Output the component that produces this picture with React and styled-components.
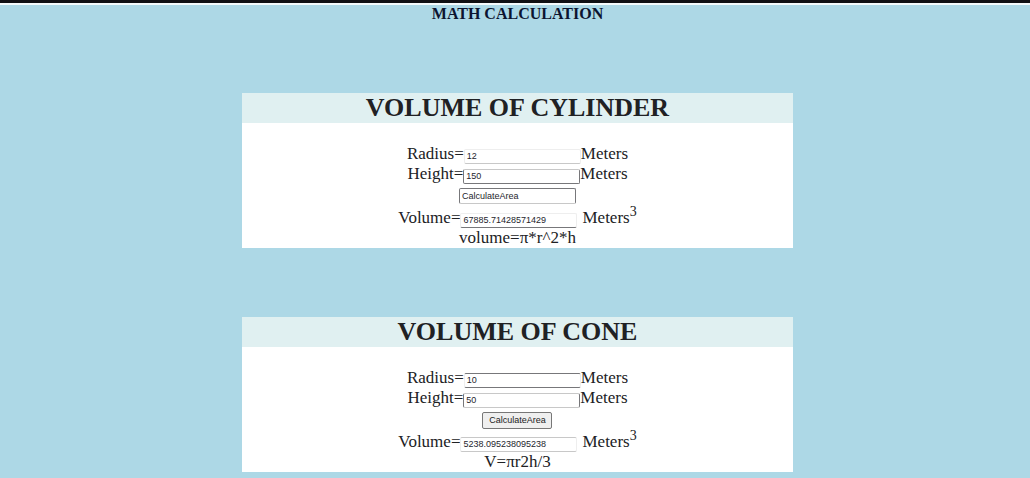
import React, { useState } from "react";
import styled, { createGlobalStyle } from "styled-components";

const GlobalStyle = createGlobalStyle`
  * { box-sizing: border-box; }
  body {
    margin: 0;
    background: #add8e6;
    color: #202124;
    font-family: "Liberation Serif", "Times New Roman", serif;
  }
`;

const TopBar = styled.div`
  height: 5px;
  background: #101014;
  border-bottom: 2px solid #f4fafc;
`;

const Page = styled.main`
  display: flex;
  flex-direction: column;
  align-items: center;
  padding: 0 0 6px 5px;
`;

const PageTitle = styled.h1`
  margin: 0 0 70px;
  font-size: 16px;
  line-height: 18px;
  color: #0c1430;
`;

const Cards = styled.div`
  display: flex;
  flex-direction: column;
  align-items: center;
  gap: 69px;
  width: 100%;
`;

const Card = styled.section`
  width: 53.7%;
  min-width: 320px;
  background: #fff;
  text-align: center;
`;

const CardTitle = styled.h2`
  margin: 0 0 21px;
  background: #e0f0f1;
  font-size: 26px;
  line-height: 30px;
`;

const Row = styled.div`
  display: flex;
  justify-content: center;
  align-items: center;
  height: ${(p) => (p.$tall ? "24px" : "20px")};
  font-size: 17px;
  line-height: 20px;
`;

const Field = styled.input`
  width: 117px;
  height: 15px;
  margin: 4px 0 0;
  padding: 0 2px;
  border: 1px solid;
  border-color: ${(p) => p.$edges};
  border-radius: 2px;
  background: #fff;
  color: #25252d;
  font: 9px "Liberation Sans", Arial, sans-serif;
  outline: none;
`;

const ActionField = styled(Field)`
  height: 16px;
  margin: 0;
`;

const Button = styled.button`
  width: 70px;
  height: 17px;
  padding: 0;
  border: 1px solid #777;
  border-radius: 2px;
  background: #efefef;
  color: #222;
  font: 9px "Liberation Sans", Arial, sans-serif;
`;

const Unit = styled.span`
  margin-left: ${(p) => (p.$spaced ? "5px" : "0")};
`;

const Cube = styled.sup`
  font-size: 14px;
  line-height: 0;
`;

const Formula = styled.p`
  margin: 0;
  font-size: 17px;
  line-height: 20px;
`;

const FAINT = "#eeeeee";
const LIGHT = "#c8c8c8";
const DARK = "#77777a";

function Measure({ id, label, edges, initial, volume }) {
  const [value, setValue] = useState(initial);
  return (
    <Row>
      <label htmlFor={id}>{label}=</label>
      <Field
        id={id}
        $edges={edges}
        value={value}
        onChange={(e) => setValue(e.target.value)}
      />
      <Unit $spaced={volume}>Meters{volume && <Cube>3</Cube>}</Unit>
    </Row>
  );
}

export default function App() {
  return (
    <>
      <GlobalStyle />
      <TopBar />
      <Page>
        <PageTitle>MATH CALCULATION</PageTitle>
        <Cards>
          <Card>
            <CardTitle>VOLUME OF CYLINDER</CardTitle>
            <Measure id="cyl-radius" label="Radius" initial="12" edges={`${FAINT} ${FAINT} ${LIGHT}`} />
            <Measure id="cyl-height" label="Height" initial="150" edges={`${LIGHT} ${DARK} ${DARK}`} />
            <Row $tall>
              <ActionField
                aria-label="Calculate area"
                defaultValue="CalculateArea"
                $edges={`${DARK} ${DARK} ${LIGHT}`}
              />
            </Row>
            <Measure id="cyl-volume" label="Volume" initial="67885.71428571429" edges={`${FAINT} ${FAINT} ${DARK}`} volume />
            <Formula>volume=π*r^2*h</Formula>
          </Card>
          <Card>
            <CardTitle>VOLUME OF CONE</CardTitle>
            <Measure id="cone-radius" label="Radius" initial="10" edges={`${DARK} ${FAINT} ${DARK}`} />
            <Measure id="cone-height" label="Height" initial="50" edges={`${LIGHT} ${DARK} ${LIGHT}`} />
            <Row $tall>
              <Button type="button">CalculateArea</Button>
            </Row>
            <Measure id="cone-volume" label="Volume" initial="5238.095238095238" edges={`${LIGHT} ${FAINT} ${LIGHT}`} volume />
            <Formula>V=πr2h/3</Formula>
          </Card>
        </Cards>
      </Page>
    </>
  );
}
